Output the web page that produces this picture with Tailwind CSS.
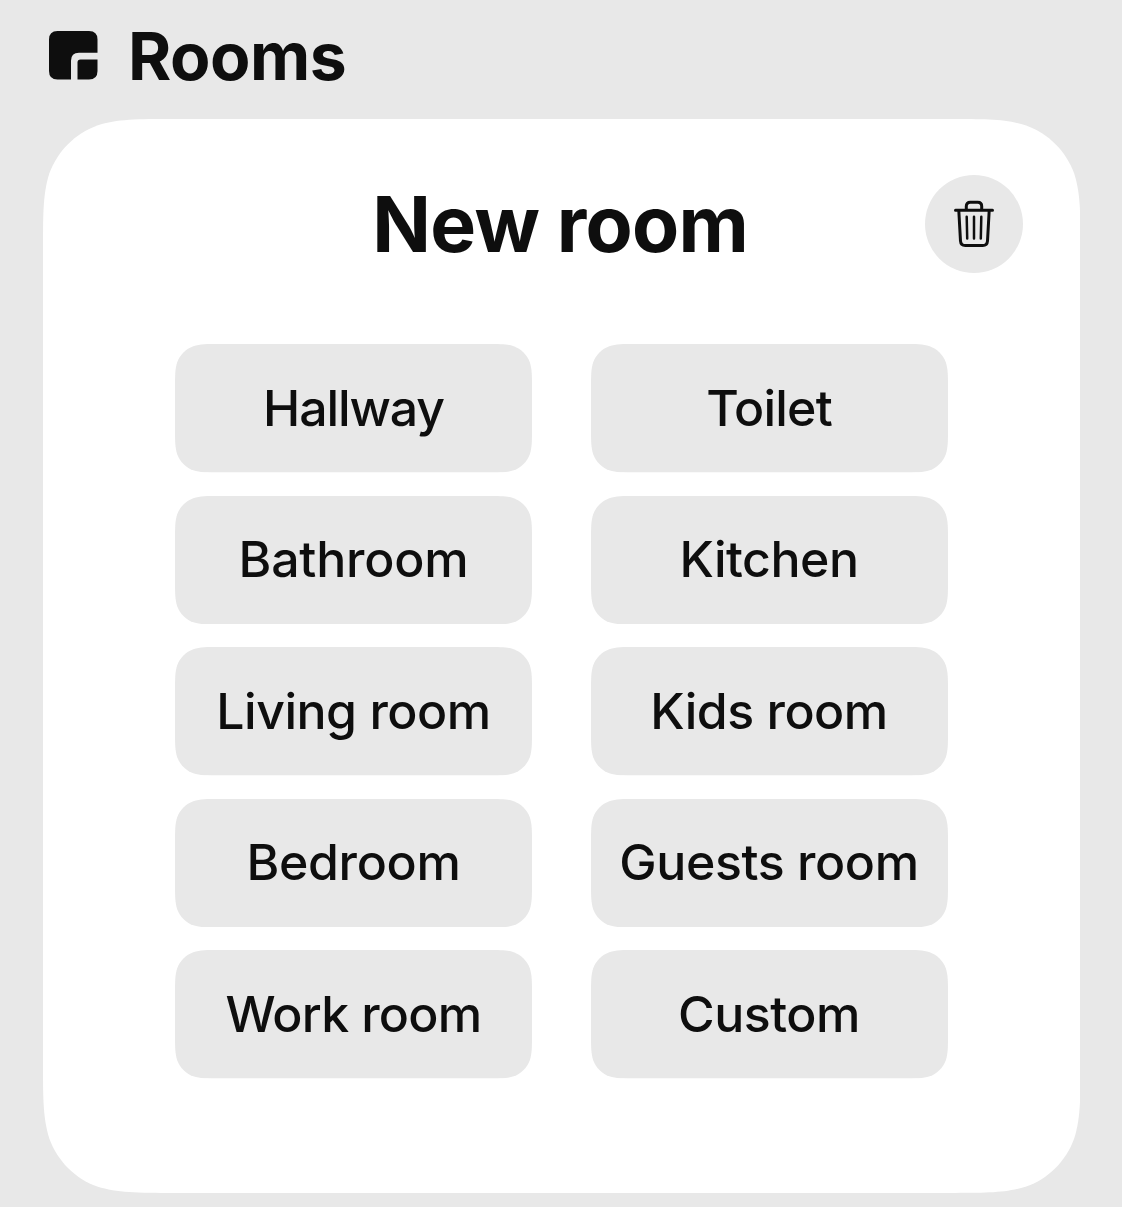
<!DOCTYPE html>
<html lang="en">
<head>
<meta charset="utf-8">
<title>Rooms</title>
<script src="https://cdn.jsdelivr.net/npm/@tailwindcss/browser@4"></script>
</head>
<body class="bg-[#e8e8e8] font-['Inter',sans-serif] text-[#0e0e0e]">
<svg class="hidden">
  <symbol id="tile" viewBox="0 0 357 128.5" preserveAspectRatio="none">
    <path d="M44.3 0H312.7C325.4 0 331.8 0 338.7 2.2C346.2 4.9 352.1 10.8 354.8 18.3C357 25.2 357 31.6 357 44.3V84.2C357 96.9 357 103.3 354.8 110.2C352.1 117.7 346.2 123.6 338.7 126.3C331.8 128.5 325.4 128.5 312.7 128.5H44.3C31.6 128.5 25.2 128.5 18.3 126.3C10.8 123.6 4.9 117.7 2.2 110.2C0 103.3 0 96.9 0 84.2V44.3C0 31.6 0 25.2 2.2 18.3C4.9 10.8 10.8 4.9 18.3 2.2C25.2 0 31.6 0 44.3 0Z" fill="#e8e8e8"/>
  </symbol>
</svg>
<div class="flex h-[1207px] w-[1122px] flex-col overflow-hidden">
  <header class="flex h-[119px] shrink-0 items-start pl-[49px] pt-[31px]">
    <svg class="h-[49px] w-[49px]" viewBox="0 0 49 49" fill="#0e0e0e">
      <path d="M8.500 0H40Q48.500 0 48.500 8.500V21.700H30Q22 21.700 22 29.700V48.500H8.500Q0 48.500 0 40V8.500Q0 0 8.500 0Z"/>
      <path d="M31.500 28.500H48.500V40Q48.500 48.500 40 48.500H28.500V31.500Q28.500 28.500 31.500 28.500Z"/>
    </svg>
    <h1 class="ml-[30px] -mt-[8px] text-[66px] leading-[66px] font-bold tracking-[-0.5px]">Rooms</h1>
  </header>
  <main class="relative ml-[42.5px] h-[1074px] w-[1037.5px] shrink-0">
    <svg class="absolute inset-0 h-full w-full" viewBox="0 0 1038 1074" preserveAspectRatio="none">
      <path d="M131 0H907C944.500 0 963.500 0 983.700 6.400C1006 14.500 1023.500 32 1031.600 54.300C1038 74.500 1038 93.500 1038 131V943C1038 980.500 1038 999.500 1031.600 1019.700C1023.500 1042 1006 1059.500 983.700 1067.600C963.500 1074 944.500 1074 907 1074H131C93.500 1074 74.500 1074 54.300 1067.600C32 1059.500 14.500 1042 6.400 1019.700C0 999.500 0 980.500 0 943V131C0 93.500 0 74.500 6.400 54.300C14.500 32 32 14.500 54.300 6.400C74.500 0 93.500 0 131 0Z" fill="#fff"/>
    </svg>
    <div class="relative grid h-[225px] grid-cols-[1fr_auto_1fr] items-start pt-[56px]">
      <h2 class="col-start-2 mt-[11px] mr-[2px] text-[77px] leading-[77px] font-bold tracking-[-0.7px] whitespace-nowrap">New room</h2>
      <button class="mr-[57px] flex h-[98px] w-[98px] items-center justify-center justify-self-end rounded-full bg-[#e8e8e8]" aria-label="Delete room">
        <svg class="h-[48px] w-[40px]" viewBox="0 0 40 48" fill="none" stroke="#0e0e0e" stroke-linecap="round" stroke-linejoin="round">
          <path stroke-width="3" d="M1.500 10.300H38.500M4.800 10.500L6.500 41Q6.800 45.500 11.300 45.500H28.700Q33.200 45.500 33.500 41L35.200 10.500M12.300 9.800V6.200Q12.300 2.200 16.300 2.200H23.700Q27.700 2.200 27.700 6.200V9.800"/>
          <path stroke-width="2.500" d="M12.700 16.700L13.200 38.500M20 16.700V38.500M27.300 16.700L26.800 38.500"/>
        </svg>
      </button>
    </div>
    <div class="relative ml-[132.5px] grid grid-cols-[357px_357px] gap-x-[58.500px] gap-y-[23px] text-[50px] leading-[60px] font-medium tracking-[-0.5px] whitespace-nowrap">
      <button class="relative flex h-[128.500px] items-center justify-center"><svg class="absolute inset-0 h-full w-full"><use href="#tile"/></svg><span class="relative -mt-px tracking-[-1.1px]">Hallway</span></button>
      <button class="relative flex h-[128.500px] items-center justify-center"><svg class="absolute inset-0 h-full w-full"><use href="#tile"/></svg><span class="relative -mt-px tracking-[-0.8px]">Toilet</span></button>
      <button class="relative flex h-[128.500px] items-center justify-center"><svg class="absolute inset-0 h-full w-full"><use href="#tile"/></svg><span class="relative -mt-[2px] tracking-[-0.2px]">Bathroom</span></button>
      <button class="relative flex h-[128.500px] items-center justify-center"><svg class="absolute inset-0 h-full w-full"><use href="#tile"/></svg><span class="relative -mt-[2px]">Kitchen</span></button>
      <button class="relative flex h-[128.500px] items-center justify-center"><svg class="absolute inset-0 h-full w-full"><use href="#tile"/></svg><span class="relative -mt-px">Living room</span></button>
      <button class="relative flex h-[128.500px] items-center justify-center"><svg class="absolute inset-0 h-full w-full"><use href="#tile"/></svg><span class="relative -mt-px">Kids room</span></button>
      <button class="relative flex h-[128.500px] items-center justify-center"><svg class="absolute inset-0 h-full w-full"><use href="#tile"/></svg><span class="relative -mt-[2px] tracking-[-0.3px]">Bedroom</span></button>
      <button class="relative flex h-[128.500px] items-center justify-center"><svg class="absolute inset-0 h-full w-full"><use href="#tile"/></svg><span class="relative -mt-[2px] tracking-[-0.4px]">Guests room</span></button>
      <button class="relative flex h-[128.500px] items-center justify-center"><svg class="absolute inset-0 h-full w-full"><use href="#tile"/></svg><span class="relative -mt-px tracking-[-0.7px]">Work room</span></button>
      <button class="relative flex h-[128.500px] items-center justify-center"><svg class="absolute inset-0 h-full w-full"><use href="#tile"/></svg><span class="relative -mt-px">Custom</span></button>
    </div>
  </main>
</div>
</body>
</html>
